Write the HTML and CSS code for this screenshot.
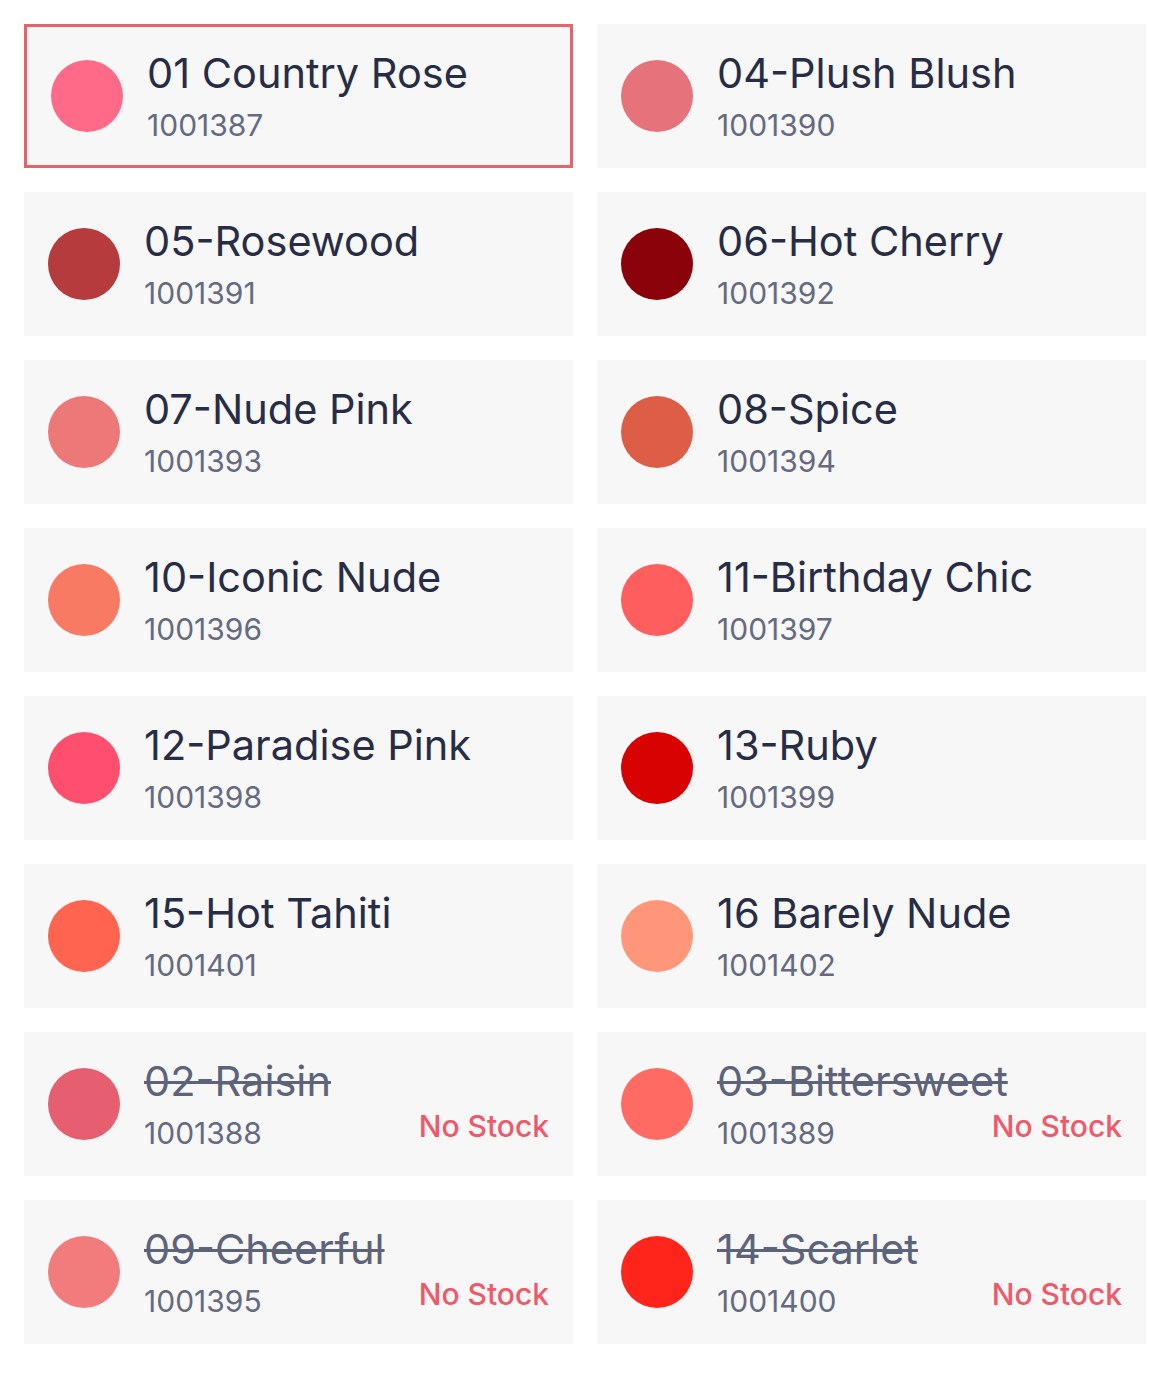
FILE: index.html
```html
<!DOCTYPE html>
<html lang="en">
<head>
    <meta charset="UTF-8">
    <meta name="viewport" content="width=device-width, initial-scale=1.0">
    <title>Shade Picker</title>
    <link rel="stylesheet" href="styles.css">
</head>
<body>
    <div class="shades">
        <div class="shade selected">
            <span class="swatch" style="background:#ff6a88"></span>
            <div class="info">
                <div class="name">01 Country Rose</div>
                <div class="meta"><span class="code">1001387</span></div>
            </div>
        </div>
        <div class="shade">
            <span class="swatch" style="background:#e6727b"></span>
            <div class="info">
                <div class="name">04-Plush Blush</div>
                <div class="meta"><span class="code">1001390</span></div>
            </div>
        </div>
        <div class="shade">
            <span class="swatch" style="background:#b53b3d"></span>
            <div class="info">
                <div class="name">05-Rosewood</div>
                <div class="meta"><span class="code">1001391</span></div>
            </div>
        </div>
        <div class="shade">
            <span class="swatch" style="background:#8a020a"></span>
            <div class="info">
                <div class="name">06-Hot Cherry</div>
                <div class="meta"><span class="code">1001392</span></div>
            </div>
        </div>
        <div class="shade">
            <span class="swatch" style="background:#ec7878"></span>
            <div class="info">
                <div class="name">07-Nude Pink</div>
                <div class="meta"><span class="code">1001393</span></div>
            </div>
        </div>
        <div class="shade">
            <span class="swatch" style="background:#de5d47"></span>
            <div class="info">
                <div class="name">08-Spice</div>
                <div class="meta"><span class="code">1001394</span></div>
            </div>
        </div>
        <div class="shade">
            <span class="swatch" style="background:#f87a62"></span>
            <div class="info">
                <div class="name">10-Iconic Nude</div>
                <div class="meta"><span class="code">1001396</span></div>
            </div>
        </div>
        <div class="shade">
            <span class="swatch" style="background:#ff5e5f"></span>
            <div class="info">
                <div class="name">11-Birthday Chic</div>
                <div class="meta"><span class="code">1001397</span></div>
            </div>
        </div>
        <div class="shade">
            <span class="swatch" style="background:#ff4f6f"></span>
            <div class="info">
                <div class="name">12-Paradise Pink</div>
                <div class="meta"><span class="code">1001398</span></div>
            </div>
        </div>
        <div class="shade">
            <span class="swatch" style="background:#d80202"></span>
            <div class="info">
                <div class="name">13-Ruby</div>
                <div class="meta"><span class="code">1001399</span></div>
            </div>
        </div>
        <div class="shade">
            <span class="swatch" style="background:#ff6450"></span>
            <div class="info">
                <div class="name">15-Hot Tahiti</div>
                <div class="meta"><span class="code">1001401</span></div>
            </div>
        </div>
        <div class="shade">
            <span class="swatch" style="background:#ff967a"></span>
            <div class="info">
                <div class="name">16 Barely Nude</div>
                <div class="meta"><span class="code">1001402</span></div>
            </div>
        </div>
        <div class="shade sold-out">
            <span class="swatch" style="background:#e55f70"></span>
            <div class="info">
                <div class="name">02-Raisin</div>
                <div class="meta"><span class="code">1001388</span><span class="stock">No Stock</span></div>
            </div>
        </div>
        <div class="shade sold-out">
            <span class="swatch" style="background:#ff6b63"></span>
            <div class="info">
                <div class="name">03-Bittersweet</div>
                <div class="meta"><span class="code">1001389</span><span class="stock">No Stock</span></div>
            </div>
        </div>
        <div class="shade sold-out">
            <span class="swatch" style="background:#f27c7c"></span>
            <div class="info">
                <div class="name">09-Cheerful</div>
                <div class="meta"><span class="code">1001395</span><span class="stock">No Stock</span></div>
            </div>
        </div>
        <div class="shade sold-out">
            <span class="swatch" style="background:#ff251b"></span>
            <div class="info">
                <div class="name">14-Scarlet</div>
                <div class="meta"><span class="code">1001400</span><span class="stock">No Stock</span></div>
            </div>
        </div>
    </div>
</body>
</html>
```

FILE: styles.css
```css
body {
    margin: 0;
    padding: 0;
    background: #fff;
    font-family: Inter, "Noto Sans", sans-serif;
}
.shades {
    display: grid;
    grid-template-columns: 1fr 1fr;
    gap: 24px;
    padding: 24px 24px 38px;
}
.shade {
    box-sizing: border-box;
    height: 144px;
    display: flex;
    align-items: center;
    padding: 0 24px;
    background: #f7f7f8;
    border: 0 solid #e8626a;
}
.shade.selected {
    border-width: 3px;
    padding-left: 24px;
    padding-right: 21px;
}
.swatch {
    flex: none;
    width: 72px;
    height: 72px;
    border-radius: 50%;
    margin-right: 24px;
}
.info {
    flex: 1;
    min-width: 0;
}
.name {
    font-size: 41.5px;
    line-height: 50px;
    color: #272d45;
    white-space: nowrap;
}
.sold-out .name {
    color: #5d6479;
    text-decoration: line-through;
    text-decoration-thickness: 3px;
}
.meta {
    display: flex;
    justify-content: space-between;
    align-items: center;
    margin-top: 7px;
}
.code {
    font-size: 30px;
    line-height: 40px;
    color: #646b80;
}
.stock {
    font-size: 30px;
    font-weight: 500;
    color: #f0596a;
    margin-top: -14px;
}
```
